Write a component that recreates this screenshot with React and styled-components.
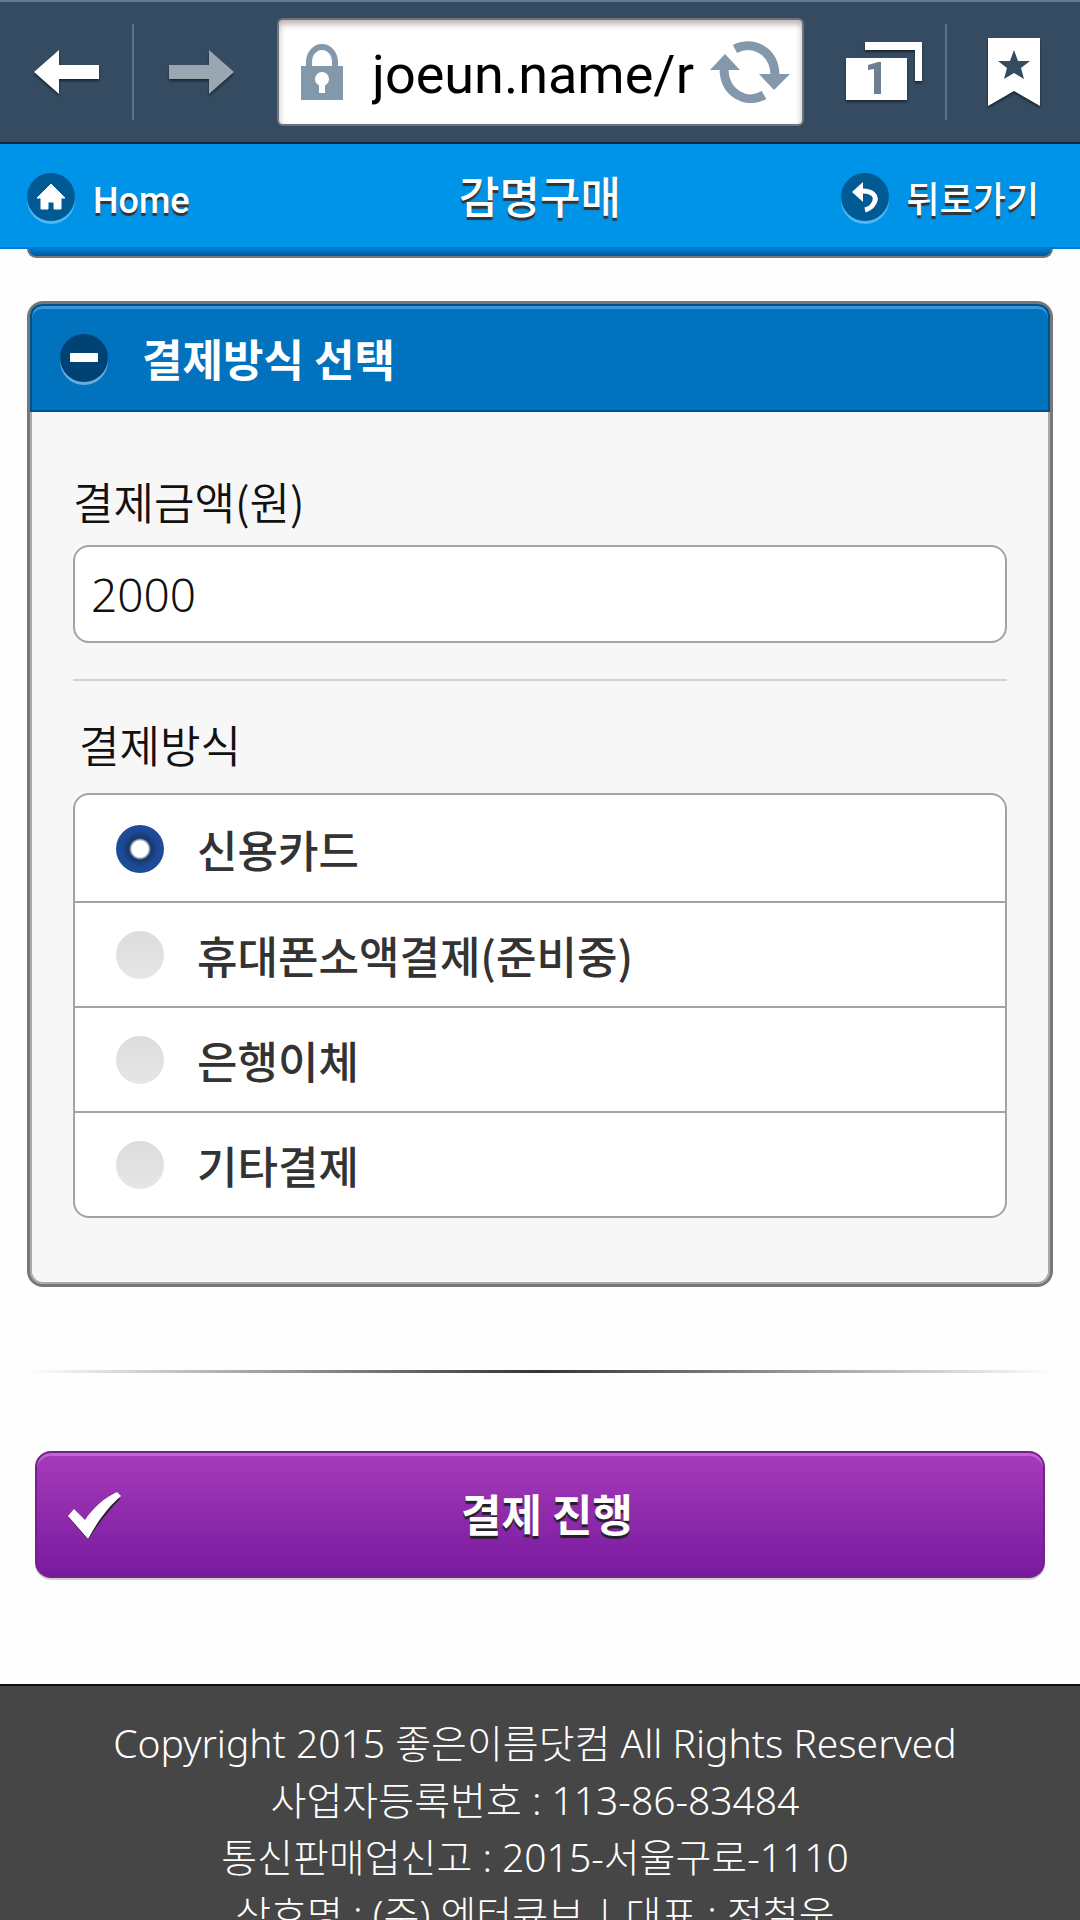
import React, { useState } from "react";
import styled, { createGlobalStyle, css } from "styled-components";

const sans = `"Noto Sans CJK KR", sans-serif`;
const wideSans = `"Noto Sans", "Noto Sans CJK KR", sans-serif`;

const GlobalStyle = createGlobalStyle`
  *, *::before, *::after { box-sizing: border-box; }
  html { height: 100%; }
  body {
    margin: 0;
    height: 100vh;
    overflow: hidden;
    background: #fefefe;
    color: #111;
    font-family: ${sans};
    font-size: 44px;
  }
`;

const BrowserBar = styled.header`
  display: flex;
  align-items: center;
  height: 144px;
  background: #344b61;
  border-top: 2px solid #5f7a94;
  border-bottom: 2px solid #14283b;
`;

const BarButton = styled.button`
  flex: none;
  display: flex;
  align-items: center;
  justify-content: center;
  width: ${(p) => p.$width}px;
  height: 100%;
  padding: 0 0 0 ${(p) => p.$inset || 0}px;
  border: 0;
  background: none;

  svg { filter: drop-shadow(0 2px 1px rgba(0, 0, 0, 0.5)); }
`;

const BarDivider = styled.span`
  flex: none;
  width: 2px;
  height: 96px;
  background: #5b7288;
`;

const AddressBox = styled.div`
  flex: 1;
  min-width: 0;
  display: flex;
  align-items: center;
  gap: 12px;
  height: 108px;
  margin-left: 8px;
  padding: 0 12px 0 22px;
  background: #fff;
  border: 2px solid #6d747b;
  border-radius: 6px;
  box-shadow: inset 0 4px 6px rgba(60, 30, 30, 0.35);
`;

const AddressInput = styled.input`
  flex: 1;
  min-width: 0;
  padding: 4px 0 0 17px;
  border: 0;
  outline: 0;
  background: none;
  color: #000;
  font: 400 54px Roboto, sans-serif;
`;

const ReloadButton = styled.button`
  display: flex;
  padding: 0;
  border: 0;
  background: none;
`;

const TitleBar = styled.div`
  position: relative;
  z-index: 1;
  display: grid;
  grid-template-columns: 1fr auto 1fr;
  align-items: center;
  height: 105px;
  padding: 2px 27px 0;
  background: #0094e8;
  border-bottom: 2px solid #0079d0;
  color: #fff;
  text-shadow: 0 3px 1px #333;
`;

const PageTitle = styled.h1`
  margin: 0;
  padding-bottom: 4px;
  font-size: 44px;
  font-weight: 500;
  line-height: 56px;
`;

const NavLink = styled.a`
  justify-self: ${(p) => p.$side};
  display: flex;
  align-items: center;
  gap: 18px;
  padding-right: 14px;
  color: inherit;
  font-family: Roboto, ${sans};
  font-size: 36px;
  font-weight: 500;
  line-height: 48px;
  text-decoration: none;
`;

const NavText = styled.span`
  padding-top: 8px;
`;

const RoundIcon = styled.span`
  flex: none;
  display: flex;
  align-items: center;
  justify-content: center;
  width: 48px;
  height: 48px;
  border-radius: 50%;
  background: ${(p) => p.$color};
  box-shadow: 0 3px 0 ${(p) => p.$edge};
`;

const Page = styled.main`
  padding: 0 27px;
`;

const ClosedPanel = styled.div`
  height: 9px;
  background: linear-gradient(#0079cf, #005a9c);
  border: 2px solid #777;
  border-top: 0;
  border-radius: 0 0 16px 16px;
`;

const Panel = styled.section`
  margin-top: 43px;
  background: #f7f7f7;
  border: 3px solid #777;
  border-radius: 16px;
  box-shadow: inset 0 0 0 2px #aaa;
`;

const PanelHeading = styled.h2`
  margin: 0;
`;

const PanelToggle = styled.button`
  display: flex;
  align-items: center;
  gap: 34px;
  width: 100%;
  height: 108px;
  padding: 0 28px;
  border: 2px solid #00528c;
  border-radius: 12px 12px 0 0;
  background: #0072be;
  box-shadow: inset 0 3px 0 #3b96d8;
  color: #fff;
  font: 700 44px/56px ${sans};
`;

const PanelBody = styled.form`
  padding: 61px 43px 66px;
`;

const labelText = css`
  display: block;
  padding: 0;
  font-size: 44px;
  font-weight: 350;
  line-height: 56px;
`;

const FieldLabel = styled.label`
  ${labelText}
`;

const AmountInput = styled.input`
  display: block;
  width: 100%;
  height: 98px;
  margin-top: 16px;
  padding: 0 16px;
  border: 2px solid #a3a3a3;
  border-radius: 16px;
  background: #fff;
  color: #111;
  font: 300 46px ${wideSans};
`;

const Separator = styled.hr`
  height: 2px;
  margin: 36px 0 0;
  border: 0;
  background: #d3d3d3;
`;

const Choices = styled.fieldset`
  margin: 35px 0 0;
  padding: 0;
  border: 0;
`;

const ChoicesLegend = styled.legend`
  ${labelText}
  padding-left: 6px;
`;

const ChoiceList = styled.div`
  margin-top: 21px;
  padding-top: 1px;
  border: 2px solid #a3a3a3;
  border-radius: 16px;
  background: #fff;
  overflow: hidden;
`;

const Choice = styled.label`
  display: flex;
  align-items: center;
  gap: 33px;
  height: 105px;
  padding-left: 41px;
  color: #333;
  font-weight: 500;
  line-height: 56px;

  & + & { border-top: 2px solid #a3a3a3; }
`;

const Radio = styled.input`
  appearance: none;
  flex: none;
  width: 48px;
  height: 48px;
  margin: 0;
  border-radius: 50%;
  background: linear-gradient(#dcdcdc, #e6e6e6);

  &:checked {
    background: radial-gradient(circle, #fff 8px, #173766 11px, #1d4a97 18px, #1f4f9f);
  }
`;

const FadingRule = styled.hr`
  height: 3px;
  margin: 83px 0 0;
  border: 0;
  background: linear-gradient(90deg, transparent, #333, transparent);
`;

const SubmitButton = styled.button`
  display: grid;
  grid-template-columns: 56px 1fr 42px;
  align-items: center;
  width: calc(100% - 16px);
  height: 127px;
  margin: 78px 8px 0;
  padding: 0 28px;
  border: 2px solid #75208c;
  border-radius: 16px;
  background: linear-gradient(#a63bba, #781a9f);
  box-shadow: inset 0 3px 0 #c066d0, 0 2px 0 #d4d0d8;
  color: #fff;
  font: 700 44px/56px ${sans};
  text-shadow: 0 3px 1px #222;
`;

const SubmitText = styled.span`
  padding-bottom: 4px;
`;

const Footer = styled.footer`
  margin-top: 106px;
  padding: 28px 30px 28px 20px;
  min-height: 300px;
  border-top: 2px solid #111;
  background: #464646;
  color: #fff;
  font-family: ${wideSans};
  font-size: 39px;
  font-weight: 300;
  line-height: 57px;
  text-align: center;
`;

const FooterLine = styled.p`
  margin: 0;
`;

const ArrowIcon = ({ forward }) => (
  <svg width="66" height="44" viewBox="0 0 66 44" fill={forward ? "#9aa7b2" : "#fff"}>
    {forward ? (
      <path d="M0 15H40V0L65 22L40 44V29H0Z" />
    ) : (
      <path d="M66 15H26V0L1 22L26 44V29H66Z" />
    )}
  </svg>
);

const LockIcon = () => (
  <svg width="42" height="56" viewBox="0 0 42 56">
    <path d="M8 24V18a13 15 0 0 1 26 0V24" fill="none" stroke="#8498ac" strokeWidth="6" />
    <path d="M0 22H42V56H0Z" fill="#8498ac" />
    <circle cx="21" cy="35" r="7" fill="#fff" />
    <path d="M18 38H24V49H18Z" fill="#fff" />
  </svg>
);

const ReloadIcon = () => (
  <svg width="80" height="62" viewBox="0 0 80 62" fill="none" stroke="#8498ac" strokeWidth="9">
    <path d="M25 8C42 -1 65 9 65 35" />
    <path d="M54 54C37 64 14 53 14 27" />
    <path d="M49 33H80L64 49Z" fill="#8498ac" stroke="none" />
    <path d="M0 29H30L15 13Z" fill="#8498ac" stroke="none" />
  </svg>
);

const TabsIcon = () => (
  <svg width="76" height="60" viewBox="0 0 76 60">
    <path d="M19 0H76V39H69V8H19Z" fill="#fff" />
    <path d="M0 16H61V58H0Z" fill="#fff" />
    <path d="M35 20V52H28V27L22 28V23L32 20Z" fill="#6d7f90" />
  </svg>
);

const BookmarkIcon = () => (
  <svg width="52" height="68" viewBox="0 0 52 68">
    <path d="M0 0H52V68L26 53L0 68Z" fill="#fff" />
    <path d="M26 12L30 23H42L33 30L36 41L26 35L16 41L19 30L10 23H22Z" fill="#344b61" />
  </svg>
);

const HomeIcon = () => (
  <svg width="30" height="28" viewBox="0 0 30 28">
    <path d="M15 1L29 15H25V26H18V19H12V26H5V15H1Z" fill="#fff" stroke="#fff" strokeWidth="1" strokeLinejoin="round" />
  </svg>
);

const BackIcon = () => (
  <svg width="26" height="32" viewBox="0 0 26 32">
    <path d="M8 10C20 9 26 15 22 22C20 26 17 28 13 29" fill="none" stroke="#fff" strokeWidth="5" />
    <path d="M0 11L11 1V21Z" fill="#fff" />
  </svg>
);

const MinusIcon = () => (
  <svg width="28" height="10" viewBox="0 0 28 10">
    <rect width="28" height="9" y="0" rx="1" fill="#fff" />
  </svg>
);

const CheckIcon = () => (
  <svg width="56" height="50" viewBox="0 0 56 50">
    <path d="M4 28L9 22L20 33C28 21 38 10 52 4L55 9C43 21 33 34 23 50Z" fill="#222" />
    <path d="M3 26L9 19L20 30C28 18 39 8 52 2L56 6C44 16 32 32 23 49Z" fill="#fff" />
  </svg>
);

const methods = ["신용카드", "휴대폰소액결제(준비중)", "은행이체", "기타결제"];

const footerLines = [
  "Copyright 2015 좋은이름닷컴 All Rights Reserved",
  "사업자등록번호 : 113-86-83484",
  "통신판매업신고 : 2015-서울구로-1110",
  "상호명 : (주) 엔터큐브 | 대표 : 정철욱",
];

export default function App() {
  const [method, setMethod] = useState(methods[0]);

  return (
    <>
      <GlobalStyle />
      <BrowserBar>
        <BarButton $width={132} aria-label="Back"><ArrowIcon /></BarButton>
        <BarDivider />
        <BarButton $width={135} aria-label="Forward"><ArrowIcon forward /></BarButton>
        <AddressBox>
          <LockIcon />
          <AddressInput aria-label="Address" defaultValue="joeun.name/r" />
          <ReloadButton aria-label="Reload"><ReloadIcon /></ReloadButton>
        </AddressBox>
        <BarButton $width={141} $inset={18} aria-label="Tabs"><TabsIcon /></BarButton>
        <BarDivider />
        <BarButton $width={133} aria-label="Bookmarks"><BookmarkIcon /></BarButton>
      </BrowserBar>
      <TitleBar>
        <NavLink href="#home" $side="start">
          <RoundIcon $color="#005a94" $edge="#4db8f5"><HomeIcon /></RoundIcon>
          <NavText>Home</NavText>
        </NavLink>
        <PageTitle>감명구매</PageTitle>
        <NavLink href="#back" $side="end">
          <RoundIcon $color="#005a94" $edge="#4db8f5"><BackIcon /></RoundIcon>
          <NavText>뒤로가기</NavText>
        </NavLink>
      </TitleBar>
      <Page>
        <ClosedPanel />
        <Panel>
          <PanelHeading>
            <PanelToggle type="button" aria-expanded="true">
              <RoundIcon $color="#004273" $edge="#66aedf"><MinusIcon /></RoundIcon>
              결제방식 선택
            </PanelToggle>
          </PanelHeading>
          <PanelBody id="payment">
            <FieldLabel htmlFor="amount">결제금액(원)</FieldLabel>
            <AmountInput id="amount" defaultValue="2000" />
            <Separator />
            <Choices>
              <ChoicesLegend>결제방식</ChoicesLegend>
              <ChoiceList>
                {methods.map((name) => (
                  <Choice key={name}>
                    <Radio
                      type="radio"
                      name="method"
                      checked={method === name}
                      onChange={() => setMethod(name)}
                    />
                    {name}
                  </Choice>
                ))}
              </ChoiceList>
            </Choices>
          </PanelBody>
        </Panel>
        <FadingRule />
        <SubmitButton type="submit" form="payment">
          <CheckIcon />
          <SubmitText>결제 진행</SubmitText>
        </SubmitButton>
      </Page>
      <Footer>
        {footerLines.map((line) => (
          <FooterLine key={line}>{line}</FooterLine>
        ))}
      </Footer>
    </>
  );
}
